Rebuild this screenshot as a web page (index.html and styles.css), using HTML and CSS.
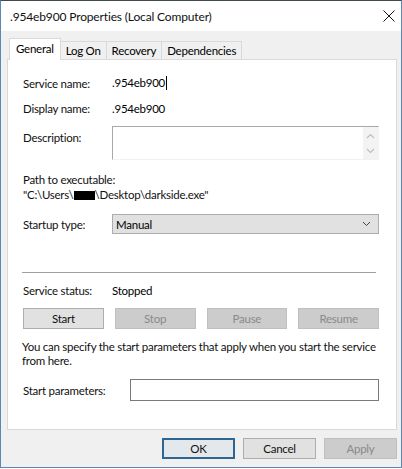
FILE: index.html
```html
<!DOCTYPE html>
<html>
<head>
<meta charset="utf-8">
<link rel="stylesheet" href="styles.css">
</head>
<body>
<div class="window">
  <div class="titlebar">
    <span class="title">.954eb900 Properties (Local Computer)</span>
    <svg class="close" width="12" height="12" viewBox="0 0 12 12"><path d="M0.5 0.5 L11.5 11.5 M11.5 0.5 L0.5 11.5" stroke="#111" stroke-width="1" fill="none"/></svg>
  </div>
  <div class="client">
    <div class="tabs">
      <div class="tab active">General</div>
      <div class="tab">Log On</div>
      <div class="tab">Recovery</div>
      <div class="tab">Dependencies</div>
    </div>
    <div class="panel">
      <div class="row r-service">
        <span class="label">Service name:</span>
        <span class="value">.954eb900<span class="caret"></span></span>
      </div>
      <div class="row r-display">
        <span class="label">Display name:</span>
        <span class="value">.954eb900</span>
      </div>
      <div class="row r-desc">
        <span class="label desc-label">Description:</span>
        <div class="descbox">
          <div class="scroll">
            <svg width="9" height="6" viewBox="0 0 9 6"><path d="M1 5 L4.5 1.5 L8 5" stroke="#bdbdbd" stroke-width="1.1" fill="none"/></svg>
            <svg width="9" height="6" viewBox="0 0 9 6"><path d="M1 1 L4.5 4.5 L8 1" stroke="#bdbdbd" stroke-width="1.1" fill="none"/></svg>
          </div>
        </div>
      </div>
      <div class="path-label">Path to executable:</div>
      <div class="path">"C:\Users\<span class="redact"></span>\Desktop\darkside.exe"</div>
      <div class="row r-startup">
        <span class="label">Startup type:</span>
        <div class="combo">
          <span>Manual</span>
          <svg width="9" height="6" viewBox="0 0 9 6"><path d="M1 1 L4.5 4.5 L8 1" stroke="#444" stroke-width="1" fill="none"/></svg>
        </div>
      </div>
      <div class="sep"></div>
      <div class="row r-status">
        <span class="label">Service status:</span>
        <span class="value">Stopped</span>
      </div>
      <div class="btnrow">
        <div class="btn">Start</div>
        <div class="btn disabled">Stop</div>
        <div class="btn disabled">Pause</div>
        <div class="btn disabled">Resume</div>
      </div>
      <div class="hint">You can specify the start parameters that apply when you start the service from here.</div>
      <div class="row r-params">
        <span class="label params-label">Start parameters:</span>
        <div class="input"></div>
      </div>
    </div>
    <div class="footer">
      <div class="btn fbtn default">OK</div>
      <div class="btn fbtn">Cancel</div>
      <div class="btn fbtn disabled">Apply</div>
    </div>
  </div>
</div>
</body>
</html>
```
FILE: styles.css
```css
* { box-sizing: border-box; }
html, body {
  margin: 0;
  padding: 0;
  width: 402px;
  height: 469px;
  overflow: hidden;
  background: #ffffff;
}
body {
  font-family: Lato, "Noto Sans", sans-serif;
  font-size: 11.5px;
  letter-spacing: -0.25px;
  color: #000;
}
.window {
  width: 402px;
  height: 468px;
  border-top: 1px solid #3f4a4d;
  border-left: 1px solid #5d87b3;
  border-right: 1px solid #5d87b3;
  border-bottom: 1px solid #5d87b3;
  display: flex;
  flex-direction: column;
}
.titlebar {
  height: 30px;
  background: #fff;
  display: flex;
  align-items: center;
  justify-content: space-between;
  padding: 0 6px 0 9px;
  flex: none;
}
.title {
  font-size: 12px;
  letter-spacing: -0.15px;
  color: #111;
}
.client {
  flex: 1;
  background: #f0f0f0;
  padding: 7px 4px 0 6px;
  display: flex;
  flex-direction: column;
}
.tabs {
  display: flex;
  align-items: flex-end;
  height: 21px;
  padding-left: 2px;
  position: relative;
  z-index: 1;
}
.tab {
  height: 18px;
  padding: 0 5px;
  border: 1px solid #d9d9d9;
  border-bottom: none;
  border-left: none;
  background: #f0f0f0;
  display: flex;
  align-items: center;
  line-height: 14px;
}
.tab.active {
  background: #fff;
  border-left: 1px solid #d9d9d9;
  padding: 0 6px 2px 6px;
  margin-bottom: -1px;
  height: 22px;
}
.panel {
  width: 390px;
  height: 371px;
  background: #fff;
  border: 1px solid #d9d9d9;
  padding: 0 17px 0 15px;
  display: flex;
  flex-direction: column;
  flex: none;
}
.row {
  display: flex;
  align-items: center;
}
.label {
  width: 89px;
  flex: none;
  color: #111;
}
.caret {
  display: inline-block;
  width: 1px;
  height: 14px;
  background: #000;
  vertical-align: -3px;
  margin-left: 1px;
}
.r-service { margin-top: 14px; height: 18px; }
.r-display { margin-top: 7px; height: 18px; }
.r-desc {
  margin-top: 9px;
  align-items: flex-start;
}
.desc-label { padding-top: 5px; }
.descbox {
  flex: 1;
  height: 34px;
  border-top: 1px solid #a8a8a8;
  border-left: 1px solid #a8a8a8;
  border-right: 1px solid #f2f2f2;
  border-bottom: 1px solid #f2f2f2;
  display: flex;
  justify-content: flex-end;
}
.scroll {
  width: 15px;
  background: #f3f3f3;
  display: flex;
  flex-direction: column;
  align-items: center;
  justify-content: space-between;
  padding: 6px 0 5px;
}
.path-label {
  margin-top: 12px;
  line-height: 15px;
  color: #111;
}
.path {
  line-height: 16px;
  color: #111;
}
.redact {
  display: inline-block;
  width: 21px;
  height: 9px;
  background: #000;
  vertical-align: -1px;
}
.r-startup { margin-top: 11px; }
.combo {
  flex: 1;
  height: 20px;
  background: #e1e1e1;
  border: 1px solid #adadad;
  display: flex;
  align-items: center;
  justify-content: space-between;
  padding: 0 7px 0 3px;
}
.sep {
  margin-top: 38px;
  margin-left: -1px;
  margin-right: 3px;
  height: 1px;
  background: #a0a0a0;
  flex: none;
}
.r-status { margin-top: 9px; height: 16px; }
.btnrow {
  margin-top: 10px;
  display: grid;
  grid-template-columns: repeat(4, 1fr);
  gap: 11px;
}
.btn {
  height: 21px;
  background: #e1e1e1;
  border: 1px solid #adadad;
  display: flex;
  align-items: center;
  justify-content: center;
  color: #111;
}
.btn.disabled {
  background: #cccccc;
  border-color: #bfbfbf;
  color: #8a8a8a;
}
.hint {
  margin-top: 11px;
  line-height: 14px;
  margin-left: -1px;
  color: #111;
}
.r-params { margin-top: 11px; }
.params-label { width: 107px; }
.input {
  flex: 1;
  height: 22px;
  border: 1px solid #7a7a7a;
  background: #fff;
}
.footer {
  display: flex;
  justify-content: flex-end;
  gap: 8px;
  margin-top: 8px;
}
.fbtn {
  width: 73px;
  height: 21px;
}
.btn.default {
  border: 2px solid #2f6691;
  background: #e3e8ec;
}
```
